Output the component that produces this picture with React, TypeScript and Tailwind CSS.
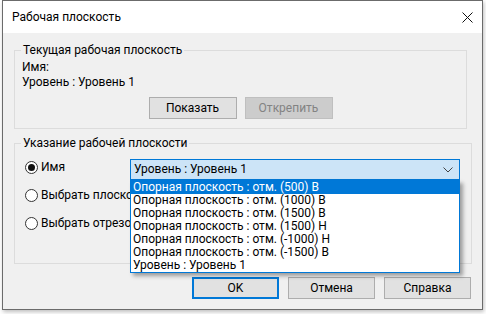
import React from "react";

const items = [
  "Опорная плоскость : отм. (500) В",
  "Опорная плоскость : отм. (1000) В",
  "Опорная плоскость : отм. (1500) В",
  "Опорная плоскость : отм. (1500) Н",
  "Опорная плоскость : отм. (-1000) Н",
  "Опорная плоскость : отм. (-1500) В",
  "Уровень : Уровень 1",
];

const Radio = ({ checked, label }: { checked?: boolean; label: string }) => (
  <div className="flex items-center h-[14px] whitespace-nowrap">
    <span className="w-[13px] h-[13px] rounded-full border border-[#333333] bg-white flex items-center justify-center shrink-0">
      {checked && <span className="w-[7px] h-[7px] rounded-full bg-[#111111]" />}
    </span>
    <span className="ml-[3px] leading-[14px]">{label}</span>
  </div>
);

const Btn = ({ children, disabled, primary, w = "w-[88px]" }: { children: React.ReactNode; disabled?: boolean; primary?: boolean; w?: string }) => (
  <div
    className={`${w} h-[22px] flex items-center justify-center ${
      disabled
        ? "bg-[#cccccc] border border-[#bfbfbf] text-[#838383]"
        : primary
        ? "bg-[#e1e1e1] border-2 border-[#0078d7] text-black"
        : "bg-[#e1e1e1] border border-[#adadad] text-black"
    }`}
  >
    {children}
  </div>
);

export default function App() {
  return (
    <div className="relative w-[486px] h-[314px] bg-white text-[12px] text-black overflow-hidden font-[Roboto,'Liberation_Sans',sans-serif]">
      <div className="ml-[2px] w-[481px] h-[310px] border border-[#6b6b6b] bg-[#f0f0f0] flex flex-col shadow-[1px_2px_4px_rgba(0,0,0,0.25)]">
        {/* title bar */}
        <div className="h-[32px] bg-white flex items-center pl-[9px] pr-[9px] shrink-0">
          <span className="leading-[16px]">Рабочая плоскость</span>
          <svg className="ml-auto" width="11" height="11" viewBox="0 0 11 11">
            <path d="M0.5 0.5 L10.5 10.5 M10.5 0.5 L0.5 10.5" stroke="#111" strokeWidth="1" />
          </svg>
        </div>

        {/* current plane */}
        <fieldset className="ml-[11px] mt-[9px] w-[453px] h-[87px] border border-[#dcdcdc]">
          <legend className="ml-[6px] px-[2px] leading-[16px]">Текущая рабочая плоскость</legend>
          <div className="pl-[7px] pt-[2px] leading-[15px]">
            <div>Имя:</div>
            <div>Уровень : Уровень 1</div>
          </div>
          <div className="flex justify-center gap-[8px] mt-[7px]">
            <Btn>Показать</Btn>
            <Btn disabled>Открепить</Btn>
          </div>
        </fieldset>

        {/* plane selection */}
        <fieldset className="ml-[11px] mt-[6px] w-[458px] h-[129px] border border-[#dcdcdc]">
          <legend className="ml-[6px] px-[2px] leading-[16px]">Указание рабочей плоскости</legend>
          <div className="pl-[10px] pt-[8px]">
            <div className="flex items-start">
              <div className="w-[105px] mt-[1px]">
                <Radio checked label="Имя" />
              </div>
              <div className="relative w-[330px]">
                <div className="h-[21px] border border-[#0078d7] bg-[#cce4f7] flex items-center pl-[3px] pr-[6px]">
                  <span className="leading-[15px]">Уровень : Уровень 1</span>
                  <svg className="ml-auto" width="10" height="6" viewBox="0 0 10 6">
                    <path d="M0.5 0.5 L5 5 L9.5 0.5" fill="none" stroke="#444" strokeWidth="1" />
                  </svg>
                </div>
                {/* open list */}
                <div className="absolute left-0 top-full w-[330px] border border-[#0078d7] bg-white z-10 shadow-[3px_3px_4px_rgba(0,0,0,0.35)]">
                  {items.map((t, i) => (
                    <div
                      key={t}
                      className={`h-[13px] leading-[13px] pl-[2px] whitespace-nowrap ${
                        i === 0 ? "bg-[#0078d7] text-white" : "text-black"
                      }`}
                    >
                      {t}
                    </div>
                  ))}
                </div>
              </div>
            </div>
            <div className="w-[105px] overflow-hidden">
              <div className="mt-[8px]">
                <Radio label="Выбрать плоскость" />
              </div>
              <div className="mt-[14px]">
                <Radio label="Выбрать отрезок" />
              </div>
            </div>
          </div>
        </fieldset>

        {/* dialog buttons */}
        <div className="flex justify-end gap-[9px] pr-[11px] mt-[13px]">
          <Btn primary w="w-[87px]">OK</Btn>
          <Btn w="w-[87px]">Отмена</Btn>
          <Btn w="w-[87px]">Справка</Btn>
        </div>
      </div>
    </div>
  );
}
